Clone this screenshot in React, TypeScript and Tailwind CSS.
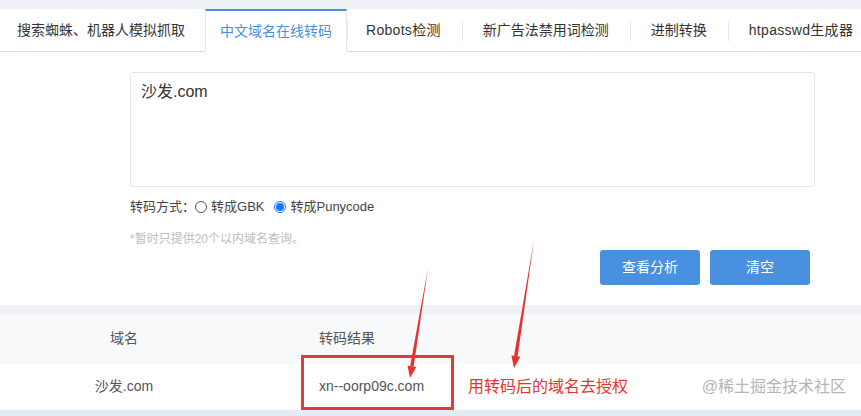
import { useState } from "react";

const tabs = [
    "搜索蜘蛛、机器人模拟抓取",
    "中文域名在线转码",
    "Robots检测",
    "新广告法禁用词检测",
    "进制转换",
    "htpasswd生成器",
];

export default function App() {
    const [mode, setMode] = useState("puny");

    return (
        <div
            className="relative w-[861px] h-[416px] overflow-hidden bg-white text-[#333]"
            style={{ fontFamily: '"Liberation Sans", "Noto Sans CJK SC", sans-serif' }}
        >
            <div className="h-[9px] bg-[#eef1f6]" />

            <nav className="flex h-[43px] border-b border-[#dcdfe6] text-[14px]">
                <TabItem label={tabs[0]} className="pl-[17px] pr-[20px]" />
                <div className="relative -mb-px flex items-center px-[14px] border-t-2 border-t-[#4a8fd9] border-x border-x-[#e4e7ed] bg-white text-[#4a8fd9]">
                    {tabs[1]}
                </div>
                <TabItem label={tabs[2]} className="pl-[19px] pr-[21px] tracking-[0.3px]" divider />
                <TabItem label={tabs[3]} className="pl-[21px] pr-[21px]" divider />
                <TabItem label={tabs[4]} className="pl-[21px] pr-[21px]" divider />
                <TabItem label={tabs[5]} className="pl-[21px] tracking-[0.3px] whitespace-nowrap" divider />
            </nav>

            <div className="pl-[130px] pr-[46px] pt-[20px]">
                <div className="h-[115px] rounded-[3px] border border-[#e6e6e6] px-[10px] pt-[7px] text-[16px] text-[#333]">
                    沙发.com
                </div>

                <div className="mt-[10px] flex items-center text-[13px] text-[#444]">
                    <span>转码方式：</span>
                    <Radio checked={mode === "gbk"} onClick={() => setMode("gbk")} label="转成GBK" />
                    <span className="w-[10px]" />
                    <Radio checked={mode === "puny"} onClick={() => setMode("puny")} label="转成Punycode" />
                </div>

                <p className="mt-[13px] text-[12px] text-[#bdbdbd]">*暂时只提供20个以内域名查询。</p>

                <div className="mt-[2px] flex justify-end gap-[10px] pr-[5px]">
                    <button className="h-[35px] w-[100px] rounded-[3px] bg-[#4a90e0] text-[14px] text-white">
                        查看分析
                    </button>
                    <button className="h-[35px] w-[100px] rounded-[3px] bg-[#4a90e0] text-[14px] text-white">
                        清空
                    </button>
                </div>
            </div>

            <div className="mt-[20px] h-[9px] bg-[#eef2f7]" />

            <div className="flex h-[50px] items-center bg-[#f8f9fb] text-[14px] text-[#555]">
                <div className="w-[248px] text-center">域名</div>
                <div className="pl-[71px]">转码结果</div>
            </div>
            <div className="flex h-[46px] items-center bg-white text-[14px] text-[#555]">
                <div className="w-[248px] text-center">沙发.com</div>
                <div className="pl-[71px]">xn--oorp09c.com</div>
                <div className="ml-[44px] text-[16px] text-[#e8322f]">用转码后的域名去授权</div>
                <div className="ml-auto mr-[15px] text-[16px] text-[#b5b5b5]">@稀土掘金技术社区</div>
            </div>
            <div className="h-[6px] bg-[#e3ebf4]" />

            {/* annotation overlay */}
            <div className="absolute left-[301px] top-[355px] h-[55px] w-[153px] border-[3px] border-[#e53935]" />
            <svg className="absolute left-0 top-0 pointer-events-none" width="861" height="416">
                <Arrow x1={428} y1={268} x2={410} y2={378} />
                <Arrow x1={534} y1={240} x2={514} y2={368} />
            </svg>
        </div>
    );
}

function TabItem({ label, className, divider }: { label: string; className: string; divider?: boolean }) {
    return (
        <div className={`relative flex items-center ${className}`}>
            {divider && <span className="absolute left-0 top-[12px] h-[20px] w-px bg-[#e8e8e8]" />}
            {label}
        </div>
    );
}

function Radio({ checked, onClick, label }: { checked: boolean; onClick: () => void; label: string }) {
    return (
        <label className="flex cursor-pointer items-center gap-[4px]" onClick={onClick}>
            <span
                className={
                    checked
                        ? "flex h-[12px] w-[12px] items-center justify-center rounded-full border border-[#1677ff]"
                        : "h-[12px] w-[12px] rounded-full border border-[#555]"
                }
            >
                {checked && <span className="h-[8px] w-[8px] rounded-full bg-[#1677ff]" />}
            </span>
            <span>{label}</span>
        </label>
    );
}

function Arrow({ x1, y1, x2, y2 }: { x1: number; y1: number; x2: number; y2: number }) {
    const dx = x2 - x1;
    const dy = y2 - y1;
    const len = Math.sqrt(dx * dx + dy * dy);
    const ux = dx / len;
    const uy = dy / len;
    const bx = x2 - ux * 12;
    const by = y2 - uy * 12;
    const px = -uy * 4.5;
    const py = ux * 4.5;
    return (
        <g>
            <polygon
                points={`${x1},${y1} ${bx + px * 0.4},${by + py * 0.4} ${bx - px * 0.4},${by - py * 0.4}`}
                fill="#e8322f"
            />
            <polygon
                points={`${x2},${y2} ${bx + px},${by + py} ${bx - px},${by - py}`}
                fill="#e8322f"
            />
        </g>
    );
}
